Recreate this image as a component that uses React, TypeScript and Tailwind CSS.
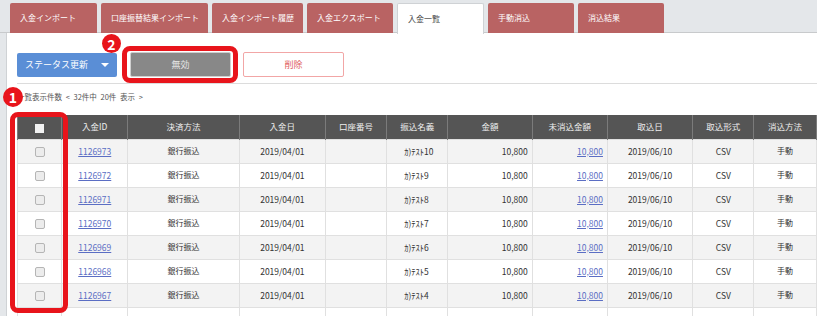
import React from 'react';

const tabs = [
  { label: '入金インポート', w: 'w-[87px]' },
  { label: '口座振替結果インポート', w: 'w-[107px]' },
  { label: '入金インポート履歴', w: 'w-[91px]' },
  { label: '入金エクスポート', w: 'w-[86px]' },
  { label: '入金一覧', w: 'w-[87px]', active: true },
  { label: '手動消込', w: 'w-[86px]' },
  { label: '消込結果', w: 'w-[86px]' },
];

const cols = [
  { label: '', w: 'w-[44px]' },
  { label: '入金ID', w: 'w-[66px]' },
  { label: '決済方法', w: 'w-[111px]' },
  { label: '入金日', w: 'w-[86px]' },
  { label: '口座番号', w: 'w-[61px]' },
  { label: '振込名義', w: 'w-[61px]' },
  { label: '金額', w: 'w-[84px]' },
  { label: '未消込金額', w: 'w-[75px]' },
  { label: '取込日', w: 'w-[85px]' },
  { label: '取込形式', w: 'w-[61px]' },
  { label: '消込方法', w: 'w-[62px]' },
  { label: '', w: 'w-[80px]' },
];

const rows = [10, 9, 8, 7, 6, 5, 4].map((n, i) => ({
  id: String(1126973 - i),
  name: `ｶ)ﾃｽﾄ${n}`,
}));

function Marker({ n, className }: { n: number; className: string }) {
  return (
    <div
      className={`absolute flex items-center justify-center rounded-full bg-[#e8141b] text-white font-bold text-[14px] leading-none ${className}`}
    >
      {n}
    </div>
  );
}

export default function App() {
  return (
    <div
      className="relative w-[817px] h-[316px] overflow-hidden bg-[#e4e7ea] text-[#333]"
      style={{ fontFamily: '"Noto Sans CJK JP", "Noto Sans", sans-serif' }}
    >
      {/* tabs */}
      <div className="flex gap-[4px] pl-[10px] pt-[3px] h-[33px] border-b border-[#c8cacc]">
        {tabs.map((t) =>
          t.active ? (
            <div
              key={t.label}
              className={`${t.w} h-[31px] -mb-px bg-white border border-b-0 border-[#cfd2d5] rounded-t-[2px] pl-[10px] flex items-center text-[8px] text-[#444]`}
            >
              {t.label}
            </div>
          ) : (
            <div
              key={t.label}
              className={`${t.w} h-[30px] bg-[#b96363] rounded-t-[2px] pl-[10px] flex items-center text-[8px] text-white`}
            >
              {t.label}
            </div>
          )
        )}
      </div>

      {/* panel */}
      <div className="ml-[6px] h-full bg-white border-l border-[#cfd2d5] pl-[10px] pt-[19px]">
        <div className="flex items-center">
          <div className="w-[100px] h-[24px] bg-[#5a8ed6] rounded-[2px] flex items-center text-white text-[9px] pl-[8px]">
            <span className="flex-1">ステータス更新</span>
            <span className="w-0 h-0 border-l-[4px] border-r-[4px] border-t-[4px] border-l-transparent border-r-transparent border-t-white mr-[8px]" />
          </div>
          <div className="ml-[13px] w-[101px] h-[25px] bg-[#888] border border-[#cfcfcf] rounded-[2px] flex items-center justify-center text-[9px] text-[#e4e4e4]">
            無効
          </div>
          <div className="ml-[12px] w-[101px] h-[25px] bg-white border border-[#f2a6a6] rounded-[2px] flex items-center justify-center text-[9px] text-[#e0605f]">
            削除
          </div>
        </div>

        <div className="mt-[6px] h-px bg-[#dcdcdc]" />

        <div className="mt-[6px] h-[14px] flex items-center text-[7.5px] text-[#555] whitespace-pre [word-spacing:2px]">
          一覧表示件数 &lt; 32件中 20件 表示 &gt;
        </div>

        <table className="mt-[11px] border-collapse table-fixed w-[880px] text-[8.5px]">
          <thead>
            <tr className="bg-[#555] text-[#eee]">
              {cols.map((c, i) => (
                <th key={i} className={`${c.w} h-[24px] border-x border-[#7b7b7b] font-normal text-center`}>
                  {i === 0 ? (
                    <span className="inline-block w-[9px] h-[9px] bg-[#f2f2f2] align-middle" />
                  ) : (
                    c.label
                  )}
                </th>
              ))}
            </tr>
          </thead>
          <tbody>
            {rows.map((r, i) => (
              <tr key={r.id} className={i % 2 === 0 ? 'bg-[#f3f3f3]' : 'bg-white'}>
                <td className="h-[24px] border border-[#e0e0e0] text-center">
                  <span className="inline-block w-[10px] h-[10px] rounded-[2px] border border-[#b5b5b5] bg-[#ececec] align-middle" />
                </td>
                <td className="border border-[#e0e0e0] text-center">
                  <span className="text-[#5b6ec4] underline">{r.id}</span>
                </td>
                <td className="border border-[#e0e0e0] text-center text-[8px]">銀行振込</td>
                <td className="border border-[#e0e0e0] text-center">2019/04/01</td>
                <td className="border border-[#e0e0e0]" />
                <td className="border border-[#e0e0e0] pl-[17px]">{r.name}</td>
                <td className="border border-[#e0e0e0] text-right pr-[4px]">10,800</td>
                <td className="border border-[#e0e0e0] text-right pr-[4px]">
                  <span className="text-[#5b6ec4] underline">10,800</span>
                </td>
                <td className="border border-[#e0e0e0] text-center">2019/06/10</td>
                <td className="border border-[#e0e0e0] text-center">CSV</td>
                <td className="border border-[#e0e0e0] text-center text-[8px]">手動</td>
                <td className="border border-[#e0e0e0]" />
              </tr>
            ))}
            <tr className="bg-white">
              {cols.map((c, i) => (
                <td key={i} className="h-[24px] border border-[#e0e0e0]" />
              ))}
            </tr>
          </tbody>
        </table>
      </div>

      {/* annotations */}
      <div className="absolute left-[122px] top-[46px] w-[116px] h-[37px] border-[5px] border-[#e8141b] rounded-[8px]" />
      <div className="absolute left-[10px] top-[112px] w-[58px] h-[201px] border-[5px] border-[#e8141b] rounded-[8px]" />
      <Marker n={1} className="left-[3px] top-[87px] w-[20px] h-[20px]" />
      <Marker n={2} className="left-[102px] top-[34px] w-[19px] h-[19px]" />
    </div>
  );
}
